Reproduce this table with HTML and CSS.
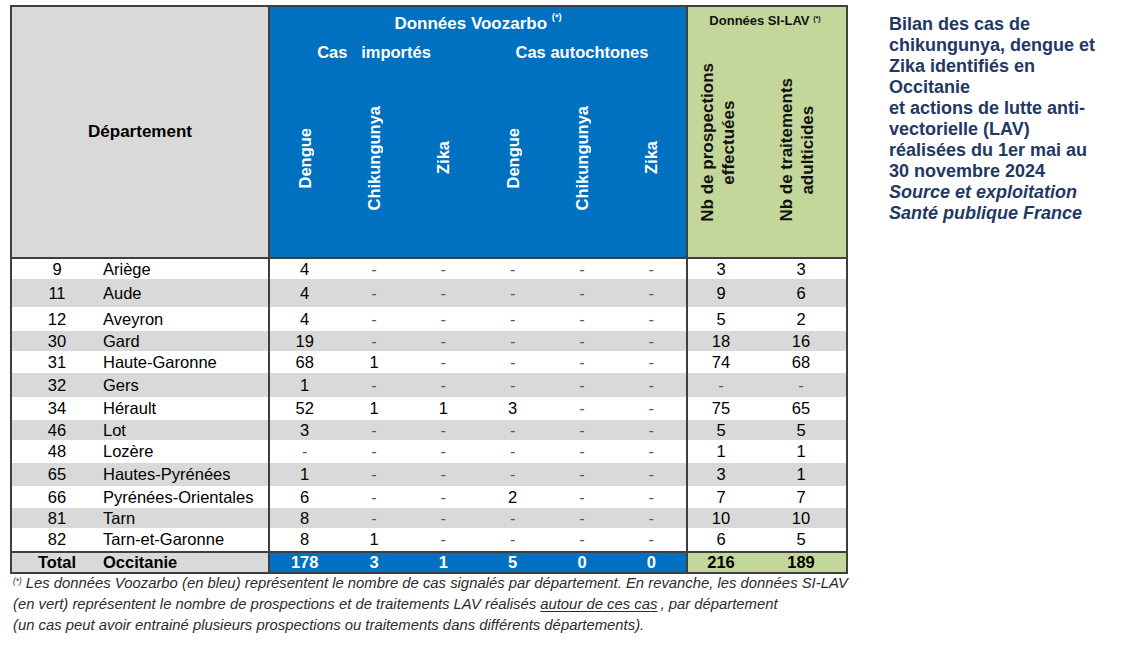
FILE: index.html
```html
<!DOCTYPE html>
<html lang="fr">
<head>
<meta charset="utf-8">
<title>Bilan chikungunya, dengue et Zika – Occitanie 2024</title>
<link rel="stylesheet" href="styles.css">
</head>
<body>
<div class="page">
  <div class="report">
    <table class="bilan">
      <colgroup>
        <col class="c-num"><col class="c-name">
        <col class="c-v"><col class="c-v"><col class="c-v"><col class="c-v"><col class="c-v"><col class="c-v">
        <col class="c-g"><col class="c-g">
      </colgroup>
      <thead>
        <tr class="h1">
          <th class="dep" rowspan="3" colspan="2">Département</th>
          <th class="vz vz-title" colspan="6">Données Voozarbo <sup>(*)</sup></th>
          <th class="silav" rowspan="3" colspan="2">
            <div class="silav-inner">
              <div class="silav-title">Données SI-LAV <sup>(*)</sup></div>
              <div class="silav-cols">
                <div class="silav-col"><span class="rot rot-g">Nb de prospections<br>effectuées</span></div>
                <div class="silav-col"><span class="rot rot-g">Nb de traitements<br>adulticides</span></div>
              </div>
            </div>
          </th>
        </tr>
        <tr class="h2">
          <th class="vz vz-sub" colspan="3">Cas&nbsp;&nbsp; importés</th>
          <th class="vz vz-sub" colspan="3">Cas autochtones</th>
        </tr>
        <tr class="h3">
          <th class="vz vz-rot"><span class="rot">Dengue</span></th>
          <th class="vz vz-rot"><span class="rot">Chikungunya</span></th>
          <th class="vz vz-rot"><span class="rot">Zika</span></th>
          <th class="vz vz-rot"><span class="rot">Dengue</span></th>
          <th class="vz vz-rot"><span class="rot">Chikungunya</span></th>
          <th class="vz vz-rot"><span class="rot">Zika</span></th>
        </tr>
      </thead>
      <tbody>
        <tr class="r20"><td>9</td><td class="name">Ariège</td><td>4</td><td class="nil">-</td><td class="nil">-</td><td class="nil">-</td><td class="nil">-</td><td class="nil">-</td><td class="g1">3</td><td class="g2">3</td></tr>
        <tr class="r28 alt"><td>11</td><td class="name">Aude</td><td>4</td><td class="nil">-</td><td class="nil">-</td><td class="nil">-</td><td class="nil">-</td><td class="nil">-</td><td class="g1">9</td><td class="g2">6</td></tr>
        <tr class="r24"><td>12</td><td class="name">Aveyron</td><td>4</td><td class="nil">-</td><td class="nil">-</td><td class="nil">-</td><td class="nil">-</td><td class="nil">-</td><td class="g1">5</td><td class="g2">2</td></tr>
        <tr class="r20 alt"><td>30</td><td class="name">Gard</td><td>19</td><td class="nil">-</td><td class="nil">-</td><td class="nil">-</td><td class="nil">-</td><td class="nil">-</td><td class="g1">18</td><td class="g2">16</td></tr>
        <tr class="r22"><td>31</td><td class="name">Haute-Garonne</td><td>68</td><td>1</td><td class="nil">-</td><td class="nil">-</td><td class="nil">-</td><td class="nil">-</td><td class="g1">74</td><td class="g2">68</td></tr>
        <tr class="r24 alt"><td>32</td><td class="name">Gers</td><td>1</td><td class="nil">-</td><td class="nil">-</td><td class="nil">-</td><td class="nil">-</td><td class="nil">-</td><td class="g1 nil">-</td><td class="g2 nil">-</td></tr>
        <tr class="r23"><td>34</td><td class="name">Hérault</td><td>52</td><td>1</td><td>1</td><td>3</td><td class="nil">-</td><td class="nil">-</td><td class="g1">75</td><td class="g2">65</td></tr>
        <tr class="r20 alt"><td>46</td><td class="name">Lot</td><td>3</td><td class="nil">-</td><td class="nil">-</td><td class="nil">-</td><td class="nil">-</td><td class="nil">-</td><td class="g1">5</td><td class="g2">5</td></tr>
        <tr class="r23"><td>48</td><td class="name">Lozère</td><td class="nil">-</td><td class="nil">-</td><td class="nil">-</td><td class="nil">-</td><td class="nil">-</td><td class="nil">-</td><td class="g1">1</td><td class="g2">1</td></tr>
        <tr class="r23 alt"><td>65</td><td class="name">Hautes-Pyrénées</td><td>1</td><td class="nil">-</td><td class="nil">-</td><td class="nil">-</td><td class="nil">-</td><td class="nil">-</td><td class="g1">3</td><td class="g2">1</td></tr>
        <tr class="r22"><td>66</td><td class="name">Pyrénées-Orientales</td><td>6</td><td class="nil">-</td><td class="nil">-</td><td>2</td><td class="nil">-</td><td class="nil">-</td><td class="g1">7</td><td class="g2">7</td></tr>
        <tr class="r20 alt"><td>81</td><td class="name">Tarn</td><td>8</td><td class="nil">-</td><td class="nil">-</td><td class="nil">-</td><td class="nil">-</td><td class="nil">-</td><td class="g1">10</td><td class="g2">10</td></tr>
        <tr class="r23"><td>82</td><td class="name">Tarn-et-Garonne</td><td>8</td><td>1</td><td class="nil">-</td><td class="nil">-</td><td class="nil">-</td><td class="nil">-</td><td class="g1">6</td><td class="g2">5</td></tr>
      </tbody>
      <tfoot>
        <tr class="total">
          <td class="t-gray">Total</td><td class="name t-gray">Occitanie</td>
          <td class="t-blue">178</td><td class="t-blue">3</td><td class="t-blue">1</td><td class="t-blue">5</td><td class="t-blue">0</td><td class="t-blue">0</td>
          <td class="g1 t-green">216</td><td class="g2 t-green">189</td>
        </tr>
      </tfoot>
    </table>
    <p class="note"><sup>(*)</sup> Les données Voozarbo (en bleu) représentent le nombre de cas signalés par département. En revanche, les données SI-LAV<br>(en vert) représentent le nombre de prospections et de traitements LAV réalisés <u>autour de ces cas</u>&thinsp;, par département<br>(un cas peut avoir entrainé plusieurs prospections ou traitements dans différents départements).</p>
  </div>
  <aside class="title">
    Bilan des cas de<br>
    chikungunya, dengue et<br>
    Zika identifiés en<br>
    Occitanie<br>
    et actions de lutte anti-<br>
    vectorielle (LAV)<br>
    réalisées du 1er mai au<br>
    30 novembre 2024<br>
    <em>Source et exploitation<br>
    Santé publique France</em>
  </aside>
</div>
</body>
</html>
```

FILE: styles.css
```css
* { box-sizing: border-box; }

html, body {
  margin: 0;
  background: #ffffff;
}

body {
  font-family: "Liberation Sans", Arial, sans-serif;
  color: #000;
}

.page {
  display: flex;
  align-items: flex-start;
  padding: 5px 0 0 10px;
}

.report {
  flex: none;
  width: 838px;
}

/* ---------- table ---------- */
.bilan {
  width: 838px;
  table-layout: fixed;
  border-collapse: separate;
  border-spacing: 0;
  border: 2px solid #3f3f3f;
  font-size: 16.5px;
}

.c-num  { width: 90px; }
.c-name { width: 168px; }
.c-v    { width: 69.33px; }
.c-g    { width: 80px; }

.bilan th,
.bilan td {
  padding: 0;
  text-align: center;
  vertical-align: middle;
}

/* header */
.h1 { height: 34px; }
.h2 { height: 22px; }
.h3 { height: 196px; }

.dep {
  background: #d9d9d9;
  border-right: 2px solid #3f3f3f;
  border-bottom: 2px solid #3f3f3f;
  font-size: 17px;
  font-weight: bold;
  padding-bottom: 2px;
}

.vz {
  background: #0070c0;
  color: #ffffff;
  font-weight: bold;
}

.vz-title {
  font-size: 17px;
  padding-top: 3px;
}

.vz-title sup,
.silav-title sup,
.note sup {
  font-size: 0.55em;
  vertical-align: top;
  position: relative;
  top: -2px;
}

.vz-sub {
  font-size: 16.5px;
}

.vz-rot {
  border-bottom: 2px solid #3f3f3f;
  padding-bottom: 8px;
  font-size: 16.5px;
}

.rot {
  display: inline-block;
  writing-mode: vertical-rl;
  transform: rotate(180deg);
  white-space: nowrap;
  line-height: 20px;
  text-align: center;
}

.silav {
  background: #c4d79b;
  border-left: 2px solid #3f3f3f;
  border-bottom: 2px solid #3f3f3f;
  vertical-align: top !important;
  color: #111;
}

.silav-inner {
  height: 250px;
  display: flex;
  flex-direction: column;
}

.silav-title {
  font-size: 13px;
  font-weight: bold;
  line-height: 16px;
  padding-top: 6px;
  padding-right: 4px;
}

.silav-cols {
  flex: 1;
  display: grid;
  grid-template-columns: 78px 80px;
  align-items: end;
  padding-bottom: 35px;
}

.silav-col {
  display: flex;
  justify-content: center;
  padding-right: 18px;
}

.rot-g {
  font-size: 17px;
  line-height: 21px;
}

/* body rows */
.r20 { height: 20px; }
.r22 { height: 22px; }
.r23 { height: 23px; }
.r24 { height: 24px; }
.r28 { height: 28px; }

tbody tr { background: #ffffff; }
tbody tr.alt { background: #d9d9d9; }

.bilan td.name {
  text-align: left;
  padding-left: 1px;
  border-right: 2px solid #3f3f3f;
  white-space: nowrap;
}

.bilan td.g1 {
  border-left: 2px solid #3f3f3f;
  padding-right: 12px;
}

.bilan td.g2 {
  padding-right: 10px;
}

.nil { color: #5a5a5a; }

/* total row */
.total { height: 20px; }

.total td {
  border-top: 2px solid #3f3f3f;
  font-weight: bold;
}

.t-gray  { background: #d9d9d9; }
.t-blue  { background: #0070c0; color: #ffffff; }
.t-green { background: #c4d79b; color: #000; }

/* footnote */
.note {
  margin: -1px 0 0 3px;
  font-size: 14.85px;
  font-style: italic;
  line-height: 21px;
  color: #2b2b2b;
  white-space: nowrap;
}

.note u {
  text-underline-offset: 2px;
}

/* side title */
.title {
  margin-left: 41px;
  padding-top: 9px;
  font-size: 18px;
  font-weight: bold;
  line-height: 21px;
  color: #1f3864;
  white-space: nowrap;
}

.title em {
  font-style: italic;
}
```
